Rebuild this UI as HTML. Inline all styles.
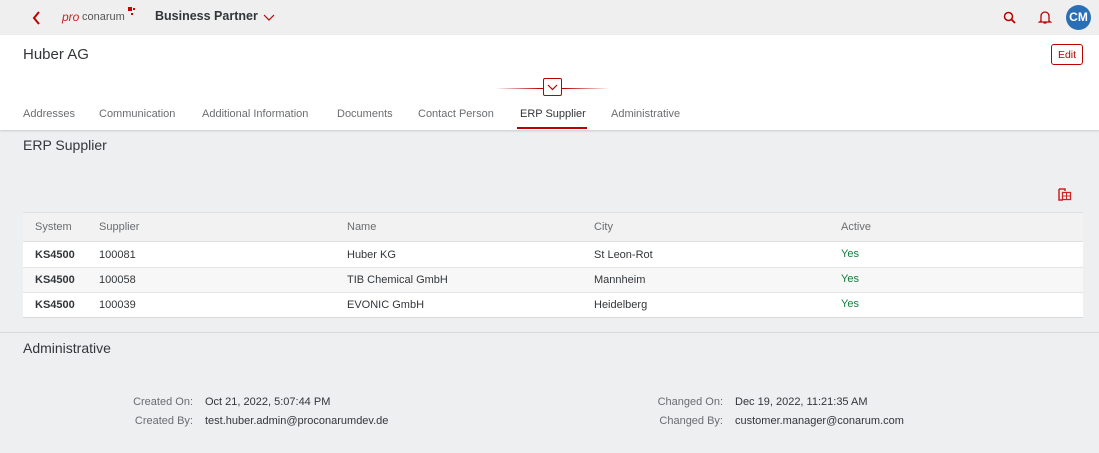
<!DOCTYPE html>
<html><head><meta charset="utf-8"><style>
*{margin:0;padding:0;box-sizing:border-box}
body{width:1099px;height:453px;overflow:hidden;background:#edeff0;font-family:"Liberation Sans",Arial,sans-serif;position:relative;color:#32363a}
.a{position:absolute;white-space:nowrap}
.top{position:absolute;left:0;top:0;width:1099px;height:35px;background:#efefef}
.hdr{position:absolute;left:0;top:35px;width:1099px;height:95px;background:#fff;box-shadow:0 1px 2px rgba(0,0,0,.15)}
.tab{font-size:11px;color:#6a6d70;top:108px}
.th{font-size:11px;color:#6a6d70}
.td{font-size:11px;color:#32363a}
.row{position:absolute;left:23px;width:1060px}
.lbl{font-size:11px;color:#6a6d70;text-align:right;width:100px}
</style></head><body>
<div class="top"></div>
<svg class="a" style="left:32px;top:11px" width="10" height="14"><path d="M7 1 L2 7 L7 13" stroke="#b00" stroke-width="2" fill="none"/></svg>
<div class="a" style="left:62px;top:10px;font-size:12px;font-style:italic;color:#c22">pro</div>
<div class="a" style="left:82px;top:11px;font-size:11px;color:#555">conarum</div>
<div class="a" style="left:128px;top:7px;width:4px;height:4px;background:#c00"></div>
<div class="a" style="left:133px;top:8px;width:2px;height:2px;background:#c00"></div>
<div class="a" style="left:131px;top:13px;width:2px;height:2px;background:#c00"></div>
<div class="a" style="left:155px;top:9px;font-size:12.5px;font-weight:bold;color:#32363a">Business Partner</div>
<svg class="a" style="left:263px;top:14px" width="12" height="8"><path d="M1 1 L6 6 L11 1" stroke="#b00" stroke-width="1.2" fill="none"/></svg>
<svg class="a" style="left:1003px;top:11px" width="14" height="14"><circle cx="5.5" cy="5.5" r="4" stroke="#b00" stroke-width="1.5" fill="none"/><path d="M8.5 8.5 L12 12" stroke="#b00" stroke-width="1.8"/></svg>
<svg class="a" style="left:1038px;top:10px" width="14" height="15"><path d="M3 11 V6 a4 4 0 0 1 8 0 V11 L12.5 12 H1.5 Z M5.5 13 h3" stroke="#b00" stroke-width="1.3" fill="none"/></svg>
<div class="a" style="left:1066px;top:5px;width:25px;height:25px;border-radius:50%;background:#2a6fb6;color:#fff;font-size:12px;font-weight:bold;text-align:center;line-height:25px">CM</div>
<div class="hdr"></div>
<div class="a" style="left:23px;top:46px;font-size:15px;color:#32363a">Huber AG</div>
<div class="a" style="left:1051px;top:44px;width:32px;height:21px;border:1px solid #b00;border-radius:3px;font-size:10.5px;color:#b00;text-align:center;line-height:20px;background:#fff">Edit</div>
<div class="a" style="left:495px;top:88px;width:115px;height:1px;background:linear-gradient(90deg,rgba(187,0,0,0),#b00 40%,#b00 60%,rgba(187,0,0,0))"></div>
<div class="a" style="left:543px;top:78px;width:19px;height:18px;border:1px solid #b00;border-radius:2px;background:#fff"></div>
<svg class="a" style="left:547px;top:84px" width="11" height="7"><path d="M1 1 L5.5 5.5 L10 1" stroke="#b00" stroke-width="1.2" fill="none"/></svg>
<div class="a tab" style="left:23px">Addresses</div>
<div class="a tab" style="left:99px">Communication</div>
<div class="a tab" style="left:202px">Additional Information</div>
<div class="a tab" style="left:337px">Documents</div>
<div class="a tab" style="left:418px">Contact Person</div>
<div class="a tab" style="left:520px;color:#32363a">ERP Supplier</div>
<div class="a" style="left:517px;top:127px;width:70px;height:2px;background:#b00"></div>
<div class="a tab" style="left:611px">Administrative</div>
<div class="a" style="left:23px;top:137px;font-size:14px;color:#32363a">ERP Supplier</div>
<svg class="a" style="left:1056px;top:186px" width="16" height="16"><path d="M3 3 H9 V5 M3 3 V14 H7" stroke="#c22" stroke-width="1.5" fill="none"/><rect x="6.5" y="6.5" width="8" height="7" fill="#fff" stroke="#c22" stroke-width="1.3"/><path d="M6.5 10 H14.5 M10.5 6.5 V13.5" stroke="#c22"/></svg>
<div class="row" style="top:212px;height:30px;background:#f2f2f2;border-top:1px solid #e0e0e0;border-bottom:1px solid #e0e0e0"></div>
<div class="row" style="top:242px;height:26px;background:#fff;border-bottom:1px solid #e5e5e5"></div>
<div class="row" style="top:268px;height:25px;background:#f7f7f7;border-bottom:1px solid #e5e5e5"></div>
<div class="row" style="top:293px;height:25px;background:#fff;border-bottom:1px solid #d9d9d9"></div>
<div class="a th" style="left:35px;top:221px">System</div>
<div class="a th" style="left:99px;top:221px">Supplier</div>
<div class="a th" style="left:347px;top:221px">Name</div>
<div class="a th" style="left:594px;top:221px">City</div>
<div class="a th" style="left:841px;top:221px">Active</div>
<div class="a td" style="left:35px;top:249px;font-weight:bold">KS4500</div>
<div class="a td" style="left:99px;top:249px">100081</div>
<div class="a td" style="left:347px;top:249px">Huber KG</div>
<div class="a td" style="left:594px;top:249px">St Leon-Rot</div>
<div class="a td" style="left:841px;top:248px;color:#107e3e">Yes</div>
<div class="a td" style="left:35px;top:274px;font-weight:bold">KS4500</div>
<div class="a td" style="left:99px;top:274px">100058</div>
<div class="a td" style="left:347px;top:274px">TIB Chemical GmbH</div>
<div class="a td" style="left:594px;top:274px">Mannheim</div>
<div class="a td" style="left:841px;top:273px;color:#107e3e">Yes</div>
<div class="a td" style="left:35px;top:299px;font-weight:bold">KS4500</div>
<div class="a td" style="left:99px;top:299px">100039</div>
<div class="a td" style="left:347px;top:299px">EVONIC GmbH</div>
<div class="a td" style="left:594px;top:299px">Heidelberg</div>
<div class="a td" style="left:841px;top:298px;color:#107e3e">Yes</div>
<div class="a" style="left:0;top:332px;width:1099px;height:1px;background:#d9d9d9"></div>
<div class="a" style="left:23px;top:340px;font-size:14px;color:#32363a">Administrative</div>
<div class="a lbl" style="left:93px;top:396px">Created On:</div>
<div class="a td" style="left:205px;top:396px">Oct 21, 2022, 5:07:44 PM</div>
<div class="a lbl" style="left:93px;top:415px">Created By:</div>
<div class="a td" style="left:205px;top:415px">test.huber.admin@proconarumdev.de</div>
<div class="a lbl" style="left:623px;top:396px">Changed On:</div>
<div class="a td" style="left:735px;top:396px">Dec 19, 2022, 11:21:35 AM</div>
<div class="a lbl" style="left:623px;top:415px">Changed By:</div>
<div class="a td" style="left:735px;top:415px">customer.manager@conarum.com</div>
</body></html>
